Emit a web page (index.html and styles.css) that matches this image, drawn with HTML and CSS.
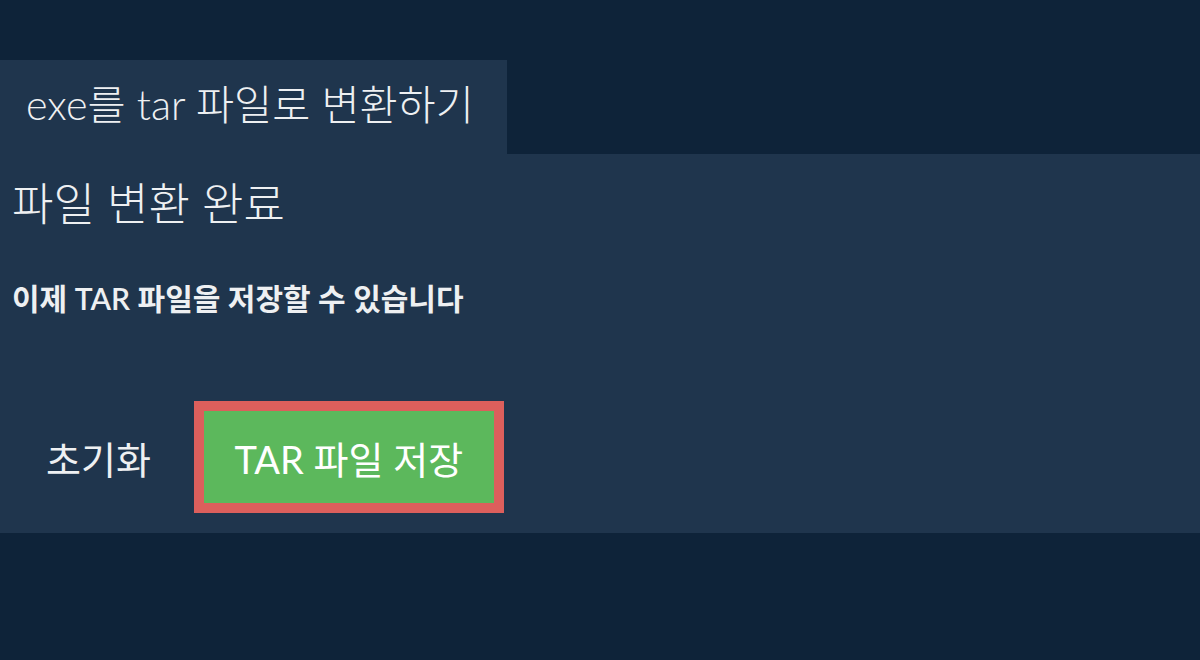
FILE: index.html
```html
<!DOCTYPE html>
<html lang="ko">
<head>
<meta charset="utf-8">
<link rel="stylesheet" href="styles.css">
</head>
<body>
<div class="page">
  <div class="tab">exe를 tar 파일로 변환하기</div>
  <div class="panel">
    <h1 class="title">파일 변환 완료</h1>
    <p class="subtitle">이제 TAR 파일을 저장할 수 있습니다</p>
    <div class="actions">
      <button class="btn-reset">초기화</button>
      <button class="btn-save">TAR 파일 저장</button>
    </div>
  </div>
</div>
</body>
</html>
```
FILE: styles.css
```css
html, body {
  margin: 0;
  padding: 0;
  background: #0e2339;
  height: 100%;
}
body {
  font-family: "Lato", "Noto Sans CJK KR", sans-serif;
  color: #eef0f2;
}
.page {
  padding-top: 60px;
}
.tab {
  width: 507px;
  height: 94px;
  box-sizing: border-box;
  background: #1f354d;
  padding-left: 26px;
  font-size: 41.4px;
  font-weight: 300;
  line-height: 88px;
  white-space: nowrap;
}
.panel {
  background: #1f354d;
  height: 379px;
  box-sizing: border-box;
  padding: 18px 12px 0;
}
.title {
  margin: 0;
  font-size: 45px;
  font-weight: 300;
  line-height: 64px;
}
.subtitle {
  margin: 45px 0 0;
  font-size: 30px;
  font-weight: 600;
  line-height: 34px;
}
.actions {
  display: flex;
  align-items: center;
  margin-top: 86px;
  gap: 9px;
}
.btn-reset {
  font-family: inherit;
  font-size: 38px;
  font-weight: 400;
  color: #eef0f2;
  background: transparent;
  border: none;
  padding: 0 34px;
  height: 92px;
}
.btn-save {
  font-family: inherit;
  font-size: 38px;
  font-weight: 400;
  color: #ffffff;
  background: #5cb85c;
  border: 10px solid #dc5f5c;
  width: 310px;
  height: 112px;
  box-sizing: border-box;
  padding: 0;
}
```
